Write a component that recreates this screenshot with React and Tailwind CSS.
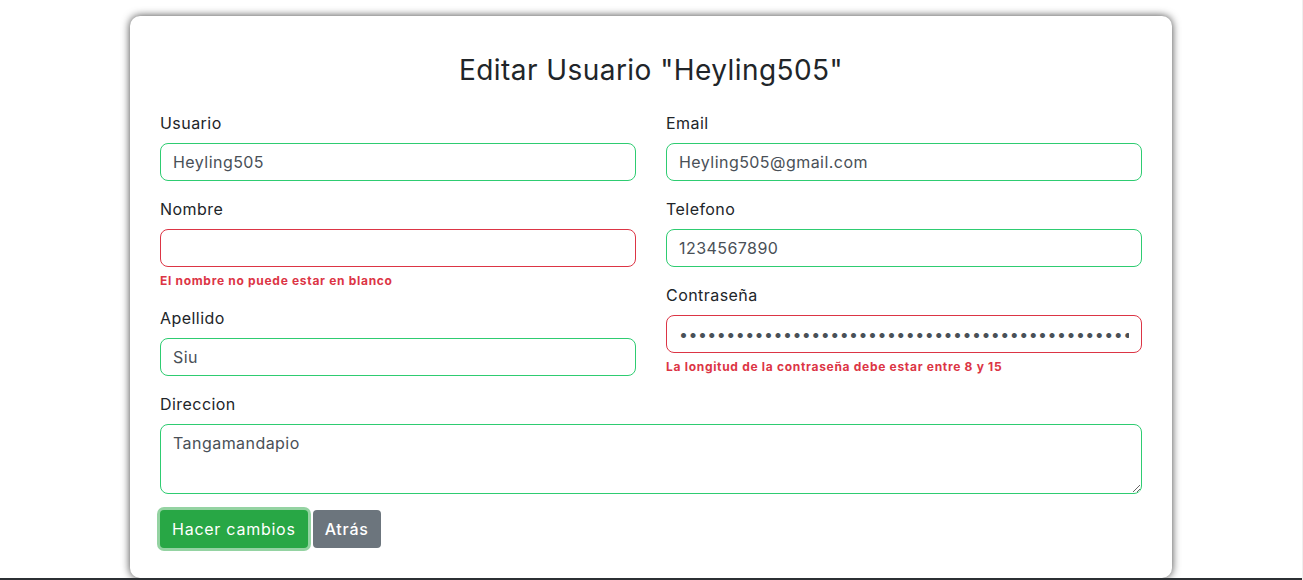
import React from 'react';

const font = { fontFamily: 'Inter, "Open Sans", sans-serif' };

const Field = ({ label, value, type = 'text', error }) => (
  <div className="mb-4">
    <label className="block text-[16px] leading-6 tracking-[0.45px] text-[#212529] mb-2">{label}</label>
    <input
      type={type}
      value={value}
      readOnly
      className={`block w-full h-[38px] rounded-lg border bg-white px-3 text-[16px] tracking-[0.45px] text-[#495057] outline-none ${
        error ? 'border-[#dc3545]' : 'border-[#2ecc71]'
      }`}
    />
    {error && (
      <div className="mt-1 text-[12px] leading-[19px] font-bold tracking-[0.7px] text-[#dc3545]">{error}</div>
    )}
  </div>
);

export default function App() {
  return (
    <div className="flex min-h-screen bg-white" style={font}>
      <div className="flex-1 flex flex-col">
        <div className="pt-4 flex justify-center">
          <div className="w-[1042px] rounded-[10px] bg-white shadow-[0_0_8px_rgba(0,0,0,0.75)] px-[30px] pt-[37px] pb-[30px]">
            <h2 className="text-center text-[28px] leading-[34px] tracking-[0.45px] text-[#212529] mb-6">
              Editar Usuario "Heyling505"
            </h2>
            <div className="grid grid-cols-2 gap-x-[30px]">
              <div>
                <Field label="Usuario" value="Heyling505" />
                <Field label="Nombre" value="" error="El nombre no puede estar en blanco" />
                <Field label="Apellido" value="Siu" />
              </div>
              <div>
                <Field label="Email" value="Heyling505@gmail.com" />
                <Field label="Telefono" value="1234567890" />
                <Field
                  label="Contraseña"
                  type="password"
                  value="abcdefghijabcdefghijabcdefghijabcdefghijabcdefghijabcdefghij"
                  error="La longitud de la contraseña debe estar entre 8 y 15"
                />
              </div>
            </div>
            <div className="mb-4">
              <label className="block text-[16px] leading-6 tracking-[0.45px] text-[#212529] mb-2">Direccion</label>
              <textarea
                readOnly
                defaultValue="Tangamandapio"
                className="block w-full h-[70px] rounded-lg border border-[#2ecc71] bg-white px-3 py-[6px] text-[16px] leading-6 tracking-[0.45px] text-[#495057] outline-none"
              />
            </div>
            <div className="flex gap-[5px]">
              <button className="h-[38px] px-3 rounded bg-[#28a745] text-white text-[16px] tracking-[0.75px] ring-[3px] ring-[#94d3a2]">
                Hacer cambios
              </button>
              <button className="h-[38px] px-3 rounded bg-[#6c757d] text-white text-[16px] font-medium tracking-[0.75px]">
                Atrás
              </button>
            </div>
          </div>
        </div>
        <div className="h-[40px] bg-[#2c3034]" />
      </div>
      <div className="w-px bg-[#efefef]" />
    </div>
  );
}
